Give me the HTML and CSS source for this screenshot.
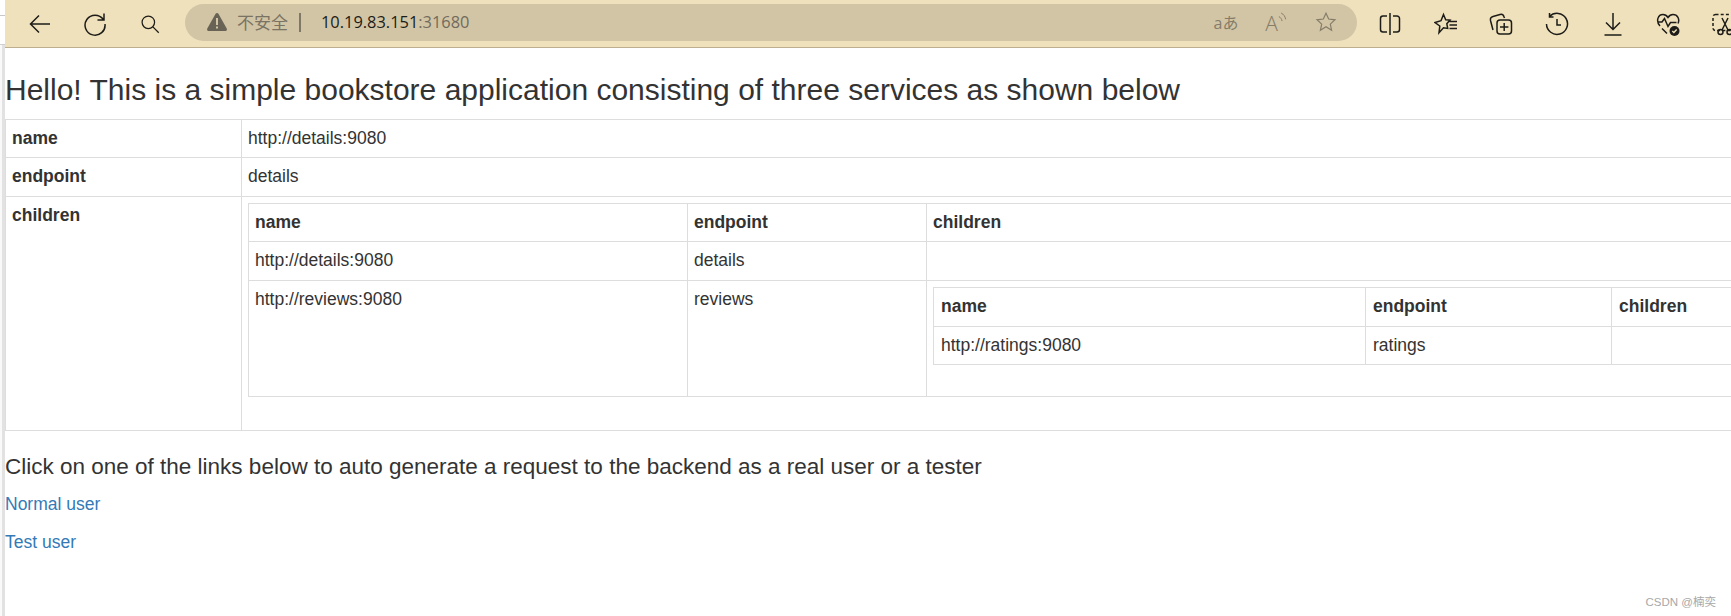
FILE: index.html
```html
<!DOCTYPE html>
<html lang="en">
<head>
<meta charset="utf-8">
<title>Bookstore</title>
<link rel="stylesheet" href="styles.css">
</head>
<body>
<div class="window">
  <aside class="strip">
    <div class="strip-top"></div>
    <div class="strip-mid"></div>
    <div class="strip-low"><div class="strip-band"></div></div>
  </aside>
  <div class="browser">
    <header class="toolbar">
      <div class="tool nav first">
        <svg viewBox="0 0 24 24" class="ico"><path d="M22 12H2.500M11 3.500 2.500 12l8.500 8.500"/></svg>
      </div>
      <div class="tool nav">
        <svg viewBox="0 0 24 24" class="ico"><path d="M20.300 7.500A10 10 0 1 0 22 12M21 1.500v6.500h-6.500"/></svg>
      </div>
      <div class="tool nav">
        <svg viewBox="0 0 24 24" class="ico small"><circle cx="10" cy="10" r="7.500"/><path d="m15.500 15.500 7 7"/></svg>
      </div>
      <div class="pill">
        <svg viewBox="0 0 20 18" class="warn"><path class="solid" d="M10 0c.6 0 1.100.3 1.400.8l8.300 14.800c.6 1.100-.1 2.400-1.400 2.400H1.700C.4 18-.3 16.700.3 15.600L8.600.8C8.900.3 9.400 0 10 0Z"/><path class="mark" d="M9 5h2v7H9zM9 13.500h2v2H9z"/></svg>
        <span class="insecure">不安全</span>
        <span class="sep"></span>
        <span class="url"><span class="host">10.19.83.151</span>:31680</span>
        <span class="pill-tools">
          <span class="ptool"><span class="tr">aあ</span></span>
          <span class="ptool read">
            <span class="read-a">A</span>
            <svg viewBox="0 0 10 12" class="waves"><path d="M1 5c2 1 3 2.500 3.500 5M3.500 1c3 1.500 4.500 4 5 7"/></svg>
          </span>
          <span class="ptool">
            <svg viewBox="0 0 24 24" class="pico"><path d="M12 2.500l2.900 6.300 6.900.8-5.100 4.700 1.400 6.800L12 17.200l-6.100 3.900 1.400-6.800L2.200 9.600l6.900-.8Z"/></svg>
          </span>
        </span>
      </div>
      <div class="apps">
        <div class="tool app">
          <svg viewBox="0 0 24 24" class="ico"><path d="M9 4H5a2.500 2.500 0 0 0-2.500 2.500v11A2.500 2.500 0 0 0 5 20h4M15 4h4a2.500 2.500 0 0 1 2.500 2.500v11A2.500 2.500 0 0 1 19 20h-4M12 1v22"/></svg>
        </div>
        <div class="tool app">
          <svg viewBox="0 0 24 24" class="ico"><path d="M9.500 2.500l2.200 5.200 4.300.4-3.200 3.600.9 4.700-4.200-.7-4.500 5 .8-6.700L1 10.500l6-1.800ZM15.500 9.500H23M15.500 13H23M15.500 16.500H23"/></svg>
        </div>
        <div class="tool app">
          <svg viewBox="0 0 24 24" class="ico"><path d="M4 18 1.500 8.500A3.500 3.500 0 0 1 4 4.500l7-2c2-.5 3.500.5 4 2.200l.5 1.300"/><rect x="8" y="8" width="14.500" height="14" rx="3"/><path d="M15.200 11v8M11 15h8.400"/></svg>
        </div>
        <div class="tool app">
          <svg viewBox="0 0 24 24" class="ico"><path d="M4.500 4.500A10.500 10.500 0 1 1 1.500 12M4.500 1v4h4M12 7v6h4"/></svg>
        </div>
        <div class="tool app">
          <svg viewBox="0 0 24 24" class="ico"><path d="M12 1v16M5 10.500l7 7 7-7M3.500 23h17"/></svg>
        </div>
        <div class="tool app">
          <svg viewBox="0 0 24 24" class="ico"><path d="M4 14C-.5 9 2 2.500 7 2.500c2.500 0 4 1.500 5 3 1-1.500 2.500-3 5-3 4.500 0 7 4.500 5 9M1.500 10H6l2.500-3.500 3.500 8 2.500-4h6M6 16.500l5 5"/><circle class="solid" cx="18.500" cy="19" r="5"/><path class="tick" d="m16.300 19 1.600 1.600 2.800-3"/></svg>
        </div>
        <div class="tool app">
          <svg viewBox="0 0 24 24" class="ico"><rect class="dash" x="1" y="2.500" width="24" height="16" rx="2.500"/><circle cx="8.500" cy="20" r="2.500"/><circle cx="17.500" cy="20" r="2.500"/><path d="m10 18 6-12M16 18 10 6"/></svg>
        </div>
      </div>
    </header>
    <main class="page">
      <h3 class="title">Hello! This is a simple bookstore application consisting of three services as shown below</h3>
      <table class="tbl outer">
        <colgroup><col class="o1"><col class="o2"></colgroup>
        <tbody>
          <tr><th>name</th><td>http://details:9080</td></tr>
          <tr class="tall"><th>endpoint</th><td>details</td></tr>
          <tr>
            <th>children</th>
            <td class="holder">
              <table class="tbl middle">
                <colgroup><col class="n1"><col class="n2"><col class="n3"></colgroup>
                <thead><tr><th>name</th><th>endpoint</th><th>children</th></tr></thead>
                <tbody>
                  <tr class="tall"><td>http://details:9080</td><td>details</td><td></td></tr>
                  <tr>
                    <td>http://reviews:9080</td>
                    <td>reviews</td>
                    <td class="holder">
                      <table class="tbl inner">
                        <colgroup><col class="i1"><col class="i2"><col class="i3"></colgroup>
                        <thead><tr class="tall"><th>name</th><th>endpoint</th><th>children</th></tr></thead>
                        <tbody><tr><td>http://ratings:9080</td><td>ratings</td><td></td></tr></tbody>
                      </table>
                    </td>
                  </tr>
                </tbody>
              </table>
            </td>
          </tr>
        </tbody>
      </table>
      <h4 class="prompt">Click on one of the links below to auto generate a request to the backend as a real user or a tester</h4>
      <p class="link-row"><a href="#normal">Normal user</a></p>
      <p class="link-row"><a href="#test">Test user</a></p>
    </main>
  </div>
</div>
<div class="mark-csdn">CSDN @楠奕</div>
</body>
</html>
```
FILE: styles.css
```css
html, body {
  margin: 0;
  height: 616px;
  overflow: hidden;
  background: #fff;
}
body {
  position: relative;
  font-family: "Liberation Sans", Arial, sans-serif;
  color: #333;
}
.window {
  display: grid;
  grid-template-columns: 5px 1fr;
  width: 1731px;
  height: 616px;
}
.strip {
  display: flex;
  flex-direction: column;
}
.strip-top {
  height: 15px;
  border-bottom: 1px solid #c8c8c8;
}
.strip-mid {
  height: 28px;
  border-bottom: 1px solid #d0d0d0;
}
.strip-low {
  flex: 1;
  display: flex;
  justify-content: flex-end;
  background: #f9f9f9;
}
.strip-band {
  width: 3px;
  background: #e2e2e2;
}
.browser {
  min-width: 0;
  overflow: hidden;
}
.toolbar {
  display: flex;
  align-items: center;
  height: 47px;
  border-bottom: 1px solid #bcae8f;
  background: #efe1bc;
  box-sizing: content-box;
}
.tool {
  display: flex;
  align-items: center;
  justify-content: center;
  flex: none;
  height: 47px;
}
.nav { width: 55px; }
.nav.first { margin-left: 7px; }
.app { width: 55.7px; }
.ico {
  width: 24px;
  height: 24px;
  fill: none;
  stroke: #1d1c18;
  stroke-width: 1.500;
}
.ico.small { width: 20px; height: 20px; }
.ico .solid { fill: #1d1c18; stroke: none; }
.ico .tick { stroke: #efe1bc; stroke-width: 1.400; }
.ico .dash { stroke-dasharray: 3 2.200; }
.pill {
  display: flex;
  align-items: center;
  flex: none;
  box-sizing: border-box;
  width: 1172px;
  height: 37px;
  margin-left: 8px;
  margin-bottom: 3px;
  padding: 0 6px 0 22px;
  border-radius: 19px;
  background: #d2c5a5;
}
.warn { width: 20px; height: 18px; flex: none; }
.warn .solid { fill: #686355; }
.warn .mark { fill: #d2c5a5; }
.insecure {
  margin-left: 10px;
  margin-bottom: 2px;
  font-family: "Noto Sans CJK SC", sans-serif;
  font-size: 17px;
  color: #7a7363;
}
.sep {
  width: 2px;
  height: 19px;
  margin: 0 20px 0 11px;
  background: #7f7866;
}
.url {
  margin-bottom: 2px;
  font-family: "Open Sans", sans-serif;
  font-size: 16.400px;
  color: #716b5c;
}
.host { color: #1d1c18; }
.pill-tools {
  display: flex;
  margin-left: auto;
}
.ptool {
  display: flex;
  align-items: center;
  justify-content: center;
  width: 50px;
  height: 37px;
}
.tr {
  font-family: "Open Sans", "Noto Sans CJK JP", sans-serif;
  font-size: 16px;
  color: #857d69;
}
.pico {
  width: 22px;
  height: 22px;
  fill: none;
  stroke: #857d69;
  stroke-width: 1.300;
}
.read { align-items: flex-start; padding-top: 6px; box-sizing: border-box; }
.read-a {
  font-family: "Open Sans", sans-serif;
  font-size: 21px;
  font-weight: 300;
  line-height: 26px;
  color: #857d69;
}
.waves {
  width: 9px;
  height: 11px;
  margin-top: 2px;
  fill: none;
  stroke: #857d69;
  stroke-width: 1.100;
}
.apps {
  display: flex;
  margin-left: 5px;
}
.page {
  width: 1726px;
}
.title {
  margin: 0;
  padding: 25px 0 12px;
  font-size: 30px;
  font-weight: 400;
  line-height: 34px;
  white-space: nowrap;
}
.tbl {
  border-collapse: collapse;
  table-layout: fixed;
  border-spacing: 0;
  font-size: 17.500px;
  line-height: 21px;
}
.tbl th, .tbl td {
  padding: 8px 6px;
  border: 1px solid #ddd;
  text-align: left;
  vertical-align: top;
  font-weight: 400;
  white-space: nowrap;
}
.tbl th { font-weight: 700; }
.tbl tr.tall > th, .tbl tr.tall > td { height: 22px; }
.tbl .holder { padding-top: 6px; }
.outer { width: 1800px; }
.o1 { width: 236px; }
.o2 { width: 1564px; }
.middle { width: 1548px; margin-bottom: 25px; }
.n1 { width: 439px; }
.n2 { width: 239px; }
.n3 { width: 870px; }
.inner { width: 850px; margin-bottom: 23px; }
.tbl.inner th, .tbl.inner td { padding-left: 7px; }
.i1 { width: 432px; }
.i2 { width: 246px; }
.i3 { width: 172px; }
.prompt {
  margin: 0 0 15px;
  padding-top: 23px;
  font-size: 22.500px;
  font-weight: 400;
  line-height: 25px;
  white-space: nowrap;
}
.link-row {
  margin: 0 0 17px;
  font-size: 17.500px;
  line-height: 21px;
}
.link-row a {
  color: #337ab7;
  text-decoration: none;
}
.mark-csdn {
  position: absolute;
  right: 15px;
  bottom: 7px;
  font-family: "Liberation Sans", "Noto Sans CJK SC", sans-serif;
  font-size: 11.500px;
  color: #a8a8a8;
}
```
